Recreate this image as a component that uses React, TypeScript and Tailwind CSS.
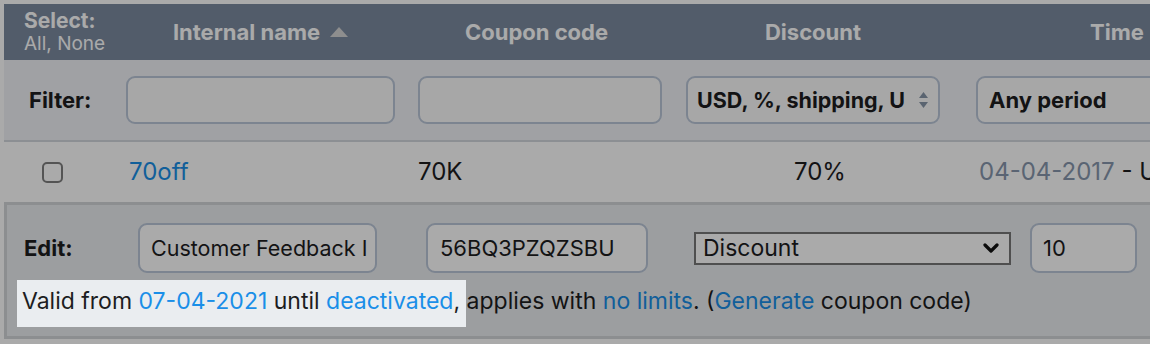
import React from "react";

function UpDown() {
  return (
    <svg width="11" height="18" viewBox="0 0 11 18" className="shrink-0">
      <path d="M5.5 1 L10 7 L1 7 Z" fill="#8796a8" />
      <path d="M5.5 17 L10 11 L1 11 Z" fill="#8796a8" />
    </svg>
  );
}

function Chevron() {
  return (
    <svg width="16" height="12" viewBox="0 0 16 12" className="shrink-0">
      <path d="M2 3 L8 9 L14 3" stroke="#111" strokeWidth="3.2" fill="none" strokeLinecap="round" strokeLinejoin="round" />
    </svg>
  );
}

export default function App() {
  return (
    <div className="w-[1150px] h-[344px] overflow-hidden bg-white pt-[4px] pl-[4px] font-['Inter',sans-serif] text-[#1d1d1f]">
      <div className="w-[1400px]">
        {/* header */}
        <div className="flex h-[56px] items-center bg-[#7c8ba0] text-white">
          <div className="w-[110px] pl-[20px]">
            <div className="text-[21px] font-bold leading-[24px]">Select:</div>
            <div className="text-[19px] leading-[22px]">All, None</div>
          </div>
          <div className="w-[293px] flex items-center justify-center text-[22px] font-bold">
            Internal name
            <svg width="18" height="10" viewBox="0 0 18 10" className="ml-[10px]">
              <path d="M9 0 L18 10 L0 10 Z" fill="#d5d5d5" />
            </svg>
          </div>
          <div className="w-[267px] flex justify-center pr-[8px] text-[22px] font-bold">Coupon code</div>
          <div className="w-[278px] flex justify-center text-[22px] font-bold">Discount</div>
          <div className="w-[330px] flex justify-center text-[22px] font-bold">Time</div>
        </div>

        {/* filter row */}
        <div className="flex h-[82px] items-center bg-[#f0f2f6] border-b-2 border-[#d2d7dd]">
          <div className="w-[110px] pl-[25px] text-[22px] font-bold">Filter:</div>
          <div className="w-[293px] pl-[12px]">
            <div className="w-[269px] h-[48px] rounded-[9px] border-2 border-[#bac6d8] bg-[#fbfbfb]" />
          </div>
          <div className="w-[267px] pl-[11px]">
            <div className="w-[244px] h-[48px] rounded-[9px] border-2 border-[#bac6d8] bg-[#fbfbfb]" />
          </div>
          <div className="w-[278px] pl-[12px]">
            <div className="w-[254px] h-[48px] rounded-[9px] border-2 border-[#bac6d8] bg-[#fbfbfb] flex items-center pl-[9px] pr-[9px] gap-[13px]">
              <div className="flex-1 overflow-hidden whitespace-nowrap text-[21.5px] font-bold">USD, %, shipping, USD off</div>
              <UpDown />
            </div>
          </div>
          <div className="w-[330px] pl-[24px]">
            <div className="w-[290px] h-[48px] rounded-[9px] border-2 border-[#bac6d8] bg-[#fbfbfb] flex items-center pl-[11px] text-[22px] font-bold">
              Any period
            </div>
          </div>
        </div>

        {/* data row */}
        <div className="flex h-[60px] items-center bg-white text-[24px]">
          <div className="w-[110px] pl-[38px]">
            <div className="w-[21px] h-[21px] rounded-[5px] border-2 border-[#7f7f7f] bg-white" />
          </div>
          <div className="w-[293px] pl-[15px] text-[#1a8fe8]">70off</div>
          <div className="w-[267px] pl-[11px]">70K</div>
          <div className="w-[278px] pl-[120px]">70%</div>
          <div className="w-[330px] pl-[27px] whitespace-nowrap">
            <span className="text-[#8797ad]">04-04-2017</span> - Unlimited
          </div>
        </div>

        {/* edit box */}
        <div className="border-[3px] border-[#d2d5d9] bg-[#eaedf0] pt-[18px] pb-[21.5px]">
          <div className="flex h-[50px] items-center">
            <div className="w-[131px] pl-[17px] text-[22px] font-bold">Edit:</div>
            <div className="w-[239px] h-[50px] rounded-[9px] border-2 border-[#bac6d8] bg-white pl-[11px] pr-[8px] flex items-center text-[21.5px]">
              <div className="flex-1 overflow-hidden whitespace-nowrap">Customer Feedback Incentive</div>
            </div>
            <div className="ml-[49px] w-[222px] h-[50px] rounded-[9px] border-2 border-[#bac6d8] bg-white pl-[12px] flex items-center text-[22px]">
              56BQ3PZQZSBU
            </div>
            <div className="ml-[46px] w-[317px] h-[33px] border-2 border-[#777777] bg-white flex items-center pl-[7px] pr-[10px] text-[23px]">
              <span className="flex-1">Discount</span>
              <Chevron />
            </div>
            <div className="ml-[19px] w-[107px] h-[50px] rounded-[9px] border-2 border-[#bac6d8] bg-white pl-[11px] flex items-center text-[22px]">
              10
            </div>
          </div>
          <div className="mt-[13.5px] pl-[15px] text-[23px] leading-[28px] whitespace-nowrap">
            <span className="relative z-10 -ml-[5px] pl-[5px] pr-[6px] -mr-[6px] pt-[6.5px] pb-[12.5px] bg-[#eaedf0] shadow-[0_0_0_3000px_rgba(0,0,0,0.333)]">
              Valid from <span className="text-[#1a8fe8]">07-04-2021</span> until{" "}
              <span className="text-[#1a8fe8]">deactivated</span>,
            </span>{" "}
            applies with <span className="text-[#1a8fe8]">no limits</span>. (
            <span className="text-[#1a8fe8]">Generate</span> coupon code)
          </div>
        </div>
      </div>
    </div>
  );
}
